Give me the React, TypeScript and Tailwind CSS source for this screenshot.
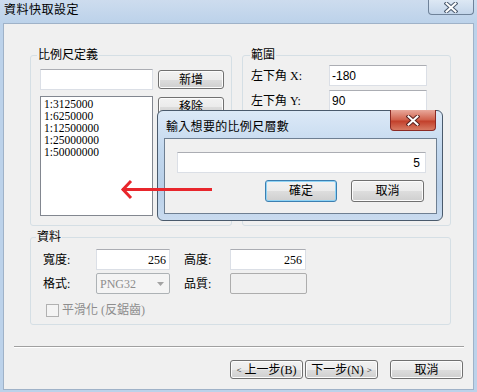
const serif = "font-['Liberation_Serif','Noto_Sans_CJK_TC',serif]";
const sans = "font-['Liberation_Sans','Noto_Sans_CJK_TC',sans-serif]";

function Btn({
  children,
  className = '',
  focus = false,
}: {
  children: React.ReactNode;
  className?: string;
  focus?: boolean;
}) {
  return (
    <div
      className={`flex shrink-0 items-center justify-center rounded-[3px] border bg-[linear-gradient(#f2f2f2_0%,#ebebeb_50%,#dddddd_51%,#cfcfcf_100%)] text-[12px] leading-[14px] text-black ${
        focus
          ? 'border-[#3c7fb1] shadow-[inset_0_0_0_1px_#8fd3f5]'
          : 'border-[#707070] shadow-[inset_0_0_0_1px_#fcfcfc]'
      } ${className}`}
    >
      {children}
    </div>
  );
}

function Field({ value, className = '', font = sans }: { value?: string; className?: string; font?: string }) {
  return (
    <div
      className={`flex h-[21px] shrink-0 items-center border border-[#dbdfe6] border-t-[#abadb3] bg-white px-[2px] text-[12px] leading-[14px] ${font} ${className}`}
    >
      {value}
    </div>
  );
}

function CloseX({ light }: { light?: boolean }) {
  return (
    <svg width="14" height="11" viewBox="0 0 14 11">
      <path d="M2.5 1.5 L11.5 9.5 M11.5 1.5 L2.5 9.5" stroke={light ? '#5b2320' : '#4b5a6e'} strokeWidth="4" strokeLinecap="square" />
      <path d="M2.5 1.5 L11.5 9.5 M11.5 1.5 L2.5 9.5" stroke="#ffffff" strokeWidth="2" strokeLinecap="square" />
    </svg>
  );
}

export default function App() {
  return (
    <div className={`relative flex h-[392px] w-[477px] flex-col overflow-hidden bg-[#bcd2ea] text-[12px] text-black ${serif}`}>
      {/* title bar */}
      <div className="flex h-[23px] shrink-0 items-start justify-between bg-[linear-gradient(#cddcee,#bcd2ea)]">
        <span className="pl-[4px] pt-[3px] leading-[14px] tracking-[0.5px]">資料快取設定</span>
        <div className="mr-[3px] flex h-[15px] w-[46px] items-center justify-center rounded-b-[4px] border border-t-0 border-[#6f8299] bg-[linear-gradient(#dde8f4,#c3d5ea)]">
          <CloseX />
        </div>
      </div>

      {/* client area */}
      <div className="mx-[3px] flex h-[367px] flex-col border border-[#9fb2c8] bg-[#f0f0f0]">
        <div className="ml-[26px] mt-[24px] flex">
          <fieldset className="h-[178px] w-[202px] rounded-[3px] border border-[#d5dfe5] pl-[9px]">
            <legend className="ml-[-3px] px-[1px] leading-[14px]">比例尺定義</legend>
            <div className="mt-[7px] flex items-start">
              <Field className="w-[113px]" />
              <Btn className="ml-[5px] mt-[1px] h-[19px] w-[66px]">新增</Btn>
            </div>
            <div className="mt-[6px] flex items-start">
              <div className="h-[120px] w-[113px] shrink-0 border border-[#828790] bg-white pl-[3px] pt-[1px] text-[11.5px] leading-[12px]">
                {['1:3125000', '1:6250000', '1:12500000', '1:25000000', '1:50000000'].map((s) => (
                  <div key={s}>{s}</div>
                ))}
              </div>
              <Btn className="ml-[5px] mt-[1px] h-[19px] w-[66px]">移除</Btn>
            </div>
          </fieldset>

          <fieldset className="ml-[10px] h-[178px] w-[209px] rounded-[3px] border border-[#d5dfe5] pl-[8px]">
            <legend className="ml-[-1px] px-[1px] leading-[14px]">範圍</legend>
            <div className="mt-[3px] flex items-center">
              <span className="w-[78px] leading-[14px]">左下角 X:</span>
              <Field className="w-[98px]" value="-180" />
            </div>
            <div className="mt-[4px] flex items-center">
              <span className="w-[78px] leading-[14px]">左下角 Y:</span>
              <Field className="w-[98px]" value="90" />
            </div>
          </fieldset>
        </div>

        <fieldset className="ml-[26px] mt-[4px] h-[95px] w-[421px] rounded-[3px] border border-[#d5dfe5] pl-[12px]">
          <legend className="ml-[-7px] px-[1px] leading-[14px]">資料</legend>
          <div className="mt-[5px] flex items-center">
            <span className="w-[53px]">寬度:</span>
            <Field className="w-[74px] justify-end pr-[3px]" value="256" font={serif} />
            <span className="ml-[14px] w-[46px]">高度:</span>
            <Field className="w-[76px] justify-end pr-[3px]" value="256" font={serif} />
          </div>
          <div className="mt-[3px] flex items-center">
            <span className="w-[53px]">格式:</span>
            <div className="flex h-[21px] w-[74px] shrink-0 items-center justify-between rounded-[2px] border border-[#adb2b5] bg-[#f4f4f4] pl-[3px] pr-[5px] text-[#8d8d8d]">
              <span>PNG32</span>
              <svg width="7" height="4" viewBox="0 0 7 4">
                <path d="M0 0 H7 L3.5 4 Z" fill="#a3a3a3" />
              </svg>
            </div>
            <span className="ml-[14px] w-[46px]">品質:</span>
            <div className="h-[21px] w-[77px] shrink-0 rounded-[2px] border border-[#adadad] bg-[#f0f0f0]" />
          </div>
          <div className="ml-[3px] mt-[9px] flex items-center text-[#8d8d8d]">
            <div className="h-[13px] w-[13px] shrink-0 border border-[#b1b1b1] bg-[#f4f4f4]" />
            <span className="ml-[3px] leading-[14px]">平滑化 (反鋸齒)</span>
          </div>
        </fieldset>

        <div className="ml-[10px] mt-[21px] h-[2px] w-[450px] border-t border-b border-t-[#a0a0a0] border-b-white" />

        <div className="ml-[226px] mt-[12px] flex">
          <Btn className="h-[19px] w-[73px]">
            <span className="mr-[3px] text-[9px]">&lt;</span>上一步(B)
          </Btn>
          <Btn className="ml-[2px] h-[19px] w-[73px]">
            下一步(N)<span className="ml-[3px] text-[9px]">&gt;</span>
          </Btn>
          <Btn className="ml-[12px] h-[19px] w-[73px]">取消</Btn>
        </div>
      </div>

      {/* prompt dialog */}
      <div className="absolute left-[157px] top-[110px] flex h-[111px] w-[286px] flex-col rounded-[6px] border border-[#4a5a6c] bg-[linear-gradient(180deg,#dce9f7_0%,#c3d8ee_35%,#b8cfe8_70%,#c9dbef_100%)]">
        <div className="relative h-[27px] shrink-0">
          <span className="block pl-[8px] pt-[9px] leading-[14px] tracking-[0.3px]">輸入想要的比例尺層數</span>
          <div className="absolute right-[6px] top-[-1px] flex h-[21px] w-[46px] items-center justify-center rounded-b-[4px] border border-t-0 border-[#8b2a25] bg-[linear-gradient(#e9a99c,#d0604b_50%,#c23f2a_55%,#d77a63_100%)]">
            <CloseX light />
          </div>
        </div>
        <div className="ml-[6px] h-[76px] w-[273px] border border-[#6e7f92] bg-[#f0f0f0]">
          <div className={`ml-[12px] mt-[13px] flex h-[21px] w-[249px] items-center justify-end border border-[#dbdfe6] border-t-[#abadb3] bg-white pr-[5px] leading-[14px] ${sans}`}>
            5
          </div>
          <div className="mt-[7px] flex">
            <Btn focus className="ml-[100px] h-[22px] w-[72px]">確定</Btn>
            <Btn className="ml-[14px] h-[22px] w-[73px]">取消</Btn>
          </div>
        </div>
      </div>

      {/* red arrow, drawn over the dialog */}
      <svg className="absolute left-[118px] top-[178px]" width="98" height="24" viewBox="0 0 98 24">
        <path d="M4 11.5 H94" stroke="#e8262c" strokeWidth="3" />
        <path d="M13 3 L5 11.5 L13 20" stroke="#e8262c" strokeWidth="3" fill="none" />
      </svg>
    </div>
  );
}
